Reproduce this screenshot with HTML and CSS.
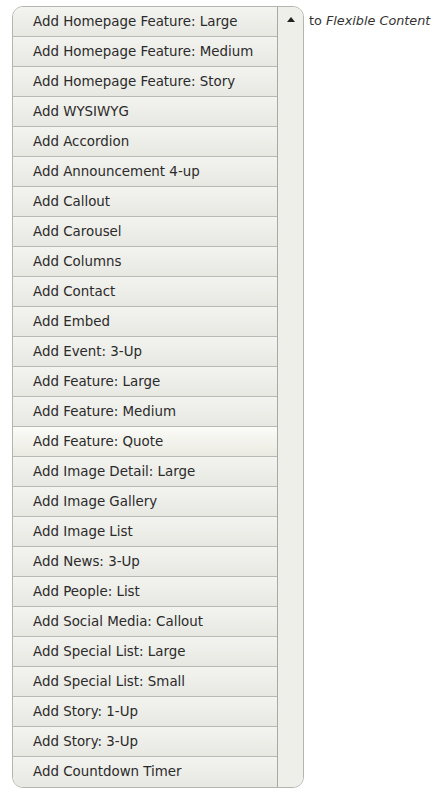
FILE: index.html
```html
<!DOCTYPE html>
<html>
<head>
<meta charset="utf-8">
<link rel="stylesheet" href="styles.css">
</head>
<body>
<div class="wrap">
  <div class="list">
    <ul class="items">
      <li class="item">Add Homepage Feature: Large</li>
      <li class="item">Add Homepage Feature: Medium</li>
      <li class="item">Add Homepage Feature: Story</li>
      <li class="item">Add WYSIWYG</li>
      <li class="item">Add Accordion</li>
      <li class="item">Add Announcement 4-up</li>
      <li class="item">Add Callout</li>
      <li class="item">Add Carousel</li>
      <li class="item">Add Columns</li>
      <li class="item">Add Contact</li>
      <li class="item">Add Embed</li>
      <li class="item">Add Event: 3-Up</li>
      <li class="item">Add Feature: Large</li>
      <li class="item">Add Feature: Medium</li>
      <li class="item hover">Add Feature: Quote</li>
      <li class="item">Add Image Detail: Large</li>
      <li class="item">Add Image Gallery</li>
      <li class="item">Add Image List</li>
      <li class="item">Add News: 3-Up</li>
      <li class="item">Add People: List</li>
      <li class="item">Add Social Media: Callout</li>
      <li class="item">Add Special List: Large</li>
      <li class="item">Add Special List: Small</li>
      <li class="item">Add Story: 1-Up</li>
      <li class="item">Add Story: 3-Up</li>
      <li class="item last">Add Countdown Timer</li>
    </ul>
    <div class="toggle">
      <svg width="8" height="5" viewBox="0 0 8 5"><path d="M0 5 L4 0 L8 5 Z" fill="#222"/></svg>
    </div>
  </div>
  <div class="suffix">to <em>Flexible Content</em></div>
</div>
</body>
</html>
```
FILE: styles.css
```css
html, body {
  margin: 0;
  padding: 0;
  background: #fff;
}
body {
  font-family: "DejaVu Sans", "Lucida Grande", sans-serif;
  color: #2a2a2a;
}
.wrap {
  display: flex;
  align-items: flex-start;
  padding: 6px 0 0 12px;
}
.list {
  display: flex;
  width: 292px;
  border: 1px solid #b4b4b0;
  border-radius: 11px;
  overflow: hidden;
  box-sizing: border-box;
}
.items {
  list-style: none;
  margin: 0;
  padding: 0;
  width: 264px;
  border-right: 1px solid #a8a8a4;
}
.item {
  height: 29px;
  line-height: 29px;
  border-bottom: 1px solid #b8b8b4;
  padding-left: 20px;
  font-size: 13.4px;
  background: linear-gradient(#f3f3ef, #e8e8e3);
  white-space: nowrap;
}
.item.last {
  border-bottom: none;
  height: 30px;
}
.item.hover {
  background: linear-gradient(#fbfbf8, #ebeae1);
}
.toggle {
  flex: 1;
  background: #efefe9;
  display: flex;
  justify-content: center;
  align-items: flex-start;
  padding-top: 10px;
}
.suffix {
  font-size: 12.8px;
  padding-left: 5px;
  padding-top: 7px;
  color: #333;
}
.suffix em {
  font-style: italic;
}
```
